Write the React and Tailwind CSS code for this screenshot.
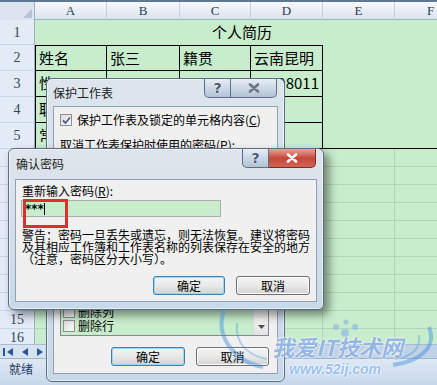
import React from "react";

const cols = [
  { id: "A", w: "w-[72px]" },
  { id: "B", w: "w-[73px]" },
  { id: "C", w: "w-[71px]" },
  { id: "D", w: "w-[72px]" },
  { id: "E", w: "w-[72px]" },
  { id: "F", w: "w-[72px]" },
];

// cells hidden under the dialogs are left empty
const table = [
  ["姓名", "张三", "籍贯", "云南昆明"],
  ["性", "", "", "198011"],
  ["职", "", "", ""],
  ["常", "", "", ""],
];

const rowHead =
  "w-[35px] shrink-0 h-full flex items-center justify-center bg-[#e3ebf6] border-r border-b border-r-[#9db2c9] border-b-[#c9d5e3] text-[14px] text-[#34465c] font-['Liberation_Serif',serif]";

function Check({ checked }) {
  return (
    <div className="w-[12px] h-[12px] shrink-0 border border-[#8e8f8f] bg-linear-to-br from-[#d9d9d9] to-[#fbfbfb] flex items-center justify-center">
      {checked && (
        <svg width="9" height="9" viewBox="0 0 9 9">
          <path d="M1 4.5 L3.5 7 L8 1.5" fill="none" stroke="#4a5f8a" strokeWidth="1.8" />
        </svg>
      )}
    </div>
  );
}

function Btn({ children, def, w }) {
  return (
    <div
      className={`${w} h-[19px] rounded-[3px] border flex items-center justify-center text-[12px] text-black bg-linear-to-b from-[#f4f4f4] via-[#e9e9e9] to-[#d2d2d2] ${
        def
          ? "border-[#3c7fb1] shadow-[inset_0_0_0_1px_#9fd6f2]"
          : "border-[#707070] shadow-[inset_0_0_0_1px_#fcfcfc]"
      }`}
    >
      {children}
    </div>
  );
}

function Caption({ active }) {
  return (
    <div className="flex">
      <div className="w-[27px] h-[19px] rounded-bl-[5px] border border-t-0 border-[#5d6f86] bg-linear-to-b from-[#e6edf5] to-[#b2c3d7] flex items-center justify-center">
        <span className="text-[14px] font-bold leading-none text-[#4a5a70] font-['DejaVu_Sans',sans-serif] [text-shadow:0_0_2px_#fff]">
          ?
        </span>
      </div>
      <div
        className={
          active
            ? "w-[47px] h-[19px] rounded-br-[5px] border border-t-0 border-l-0 border-[#7e2c22] bg-linear-to-b from-[#e8a596] via-[#c4473a] to-[#d2644f] flex items-center justify-center"
            : "w-[46px] h-[19px] rounded-br-[5px] border border-t-0 border-l-0 border-[#5d6f86] bg-linear-to-b from-[#e6edf5] to-[#b2c3d7] flex items-center justify-center"
        }
      >
        <svg width="12" height="10" viewBox="0 0 12 10">
          <path
            d="M2 1.5 L10 8.5 M10 1.5 L2 8.5"
            stroke={active ? "#ffffff" : "#6b7480"}
            strokeWidth="2.6"
            strokeLinecap="round"
          />
        </svg>
      </div>
    </div>
  );
}

function Sheet() {
  return (
    <div className="flex flex-col h-full">
      {/* column header */}
      <div className="flex h-[20px] shrink-0 border-t-2 border-[#5f7896]">
        <div className="w-[35px] shrink-0 h-full bg-[#dbe4ef] border-r border-[#9db2c9] flex items-end justify-end p-[2px]">
          <svg width="9" height="9" viewBox="0 0 9 9">
            <path d="M9 0 L9 9 L0 9 Z" fill="#b4c3d5" />
          </svg>
        </div>
        {cols.map((c) => (
          <div
            key={c.id}
            className={`${c.w} shrink-0 h-full border-r border-b border-r-[#c5d1de] border-b-[#9db2c9] bg-linear-to-b from-[#f6f9fc] to-[#dbe3ed] flex items-center justify-center text-[13px] text-[#2a3c54] font-['Liberation_Serif',serif]`}
          >
            {c.id}
          </div>
        ))}
      </div>

      <div className="h-[324px] shrink-0 overflow-hidden flex flex-col">
        <div className="flex h-[25px] shrink-0">
          <div className={rowHead}>1</div>
          <div className="flex-1 h-full flex items-center pl-[177px] text-[15px] text-black whitespace-nowrap">
            个人简历
          </div>
        </div>

        {table.map((cells, i) => (
          <div key={i} className="flex h-[26px] shrink-0">
            <div className={rowHead}>{i + 2}</div>
            {cells.map((c, j) => (
              <div
                key={j}
                className={`${cols[j].w} shrink-0 h-full border-r border-b border-black ${
                  i === 0 ? "border-t" : ""
                } ${j === 0 ? "border-l" : ""} ${
                  /^\d+$/.test(c) ? "justify-end" : ""
                } flex items-center px-[3px] text-[15px] text-black whitespace-nowrap overflow-hidden`}
              >
                {c}
              </div>
            ))}
            <div className={`w-[72px] shrink-0 h-full ${i === 3 ? "border-b border-black" : ""}`} />
            <div className={`w-[72px] shrink-0 h-full ${i === 3 ? "border-b border-black" : ""}`} />
          </div>
        ))}

        {Array.from({ length: 11 }, (_, k) => (
          <div key={k} className="flex h-[18px] shrink-0">
            <div className={rowHead}>{k + 6 >= 15 ? k + 6 : ""}</div>
            {cols.map((c) => (
              <div key={c.id} className={`${c.w} shrink-0 h-full border-r border-b border-[#b2d4b9]`} />
            ))}
          </div>
        ))}
      </div>

      {/* sheet tabs / scroll */}
      <div className="flex h-[14px] shrink-0 border-t border-[#a9bcd4]">
        <div className="w-[150px] h-full bg-[#d6e2f0] flex items-center gap-[9px] pl-[3px]">
          <svg width="10" height="8" viewBox="0 0 10 8">
            <rect x="0" y="0" width="2" height="8" fill="#2b5797" />
            <path d="M10 0 L4 4 L10 8 Z" fill="#2b5797" />
          </svg>
          <svg width="6" height="8" viewBox="0 0 6 8">
            <path d="M6 0 L0 4 L6 8 Z" fill="#2b5797" />
          </svg>
          <svg width="6" height="8" viewBox="0 0 6 8">
            <path d="M0 0 L6 4 L0 8 Z" fill="#2b5797" />
          </svg>
        </div>
        <div className="flex-1 h-full bg-[#c1d2e7]" />
      </div>

      {/* status bar */}
      <div className="flex-1 bg-linear-to-b from-[#dfe9f5] to-[#c6d7ec] border-t border-[#9fb5cf] pl-[9px] pt-[2px] text-[12px] leading-[16px] text-[#1f3a5f]">
        就绪
      </div>
    </div>
  );
}

function ProtectDialog() {
  return (
    <div className="absolute left-[46px] top-[78px] w-[239px] h-[304px] rounded-[6px] border border-[#5b6e85] bg-linear-to-b from-[#dde5ee] via-[#d3dde9] to-[#c9d8e8] shadow-[inset_0_0_0_1px_rgba(255,255,255,0.55)] flex flex-col">
      <div className="h-[27px] shrink-0 flex justify-between">
        <div className="pl-[6px] pt-[6px] text-[12px] leading-[16px] text-[#222]">保护工作表</div>
        <div className="pr-[7px]">
          <Caption />
        </div>
      </div>
      <div className="flex-1 mx-[6px] mb-[7px] bg-[#f0f0f0] border border-[#8ea1b8] flex flex-col px-[6px] text-[12px] text-black">
        <div className="flex items-center gap-[5px] mt-[6px] h-[14px] whitespace-nowrap">
          <Check checked />
          <span>
            保护工作表及锁定的单元格内容(<span className="underline">C</span>)
          </span>
        </div>
        <div className="mt-[11px] leading-[14px] whitespace-nowrap">
          取消工作表保护时使用的密码(<span className="underline">P</span>):
        </div>
        <div className="mt-auto h-[40px] mr-[2px] border border-[#828790] bg-[#c7edcc] flex">
          <div className="flex-1 flex flex-col justify-end pb-[2px]">
            {["删除列", "删除行"].map((t) => (
              <div key={t} className="h-[14px] flex items-center gap-[3px] pl-[2px] whitespace-nowrap">
                <Check />
                <span>{t}</span>
              </div>
            ))}
          </div>
          <div className="w-[15px] h-full bg-[#ececec] border-l border-[#dcdcdc] flex flex-col justify-end">
            <div className="h-[17px] flex items-center justify-center bg-linear-to-b from-[#f3f3f3] to-[#e2e2e2]">
              <svg width="7" height="4" viewBox="0 0 7 4">
                <path d="M0 0 L7 0 L3.5 4 Z" fill="#4d4d4d" />
              </svg>
            </div>
          </div>
        </div>
        <div className="mt-[11px] mb-[7px] flex justify-end gap-[11px] pr-[2px]">
          <Btn def w="w-[74px]">确定</Btn>
          <Btn w="w-[73px]">取消</Btn>
        </div>
      </div>
    </div>
  );
}

function ConfirmDialog() {
  return (
    <div className="absolute left-[8px] top-[148px] w-[316px] h-[162px] rounded-[6px] border border-[#5b6e85] bg-linear-to-b from-[#dfe5ec] via-[#d4dee9] to-[#c8d9ea] shadow-[inset_0_0_0_1px_rgba(255,255,255,0.55),5px_5px_10px_rgba(0,0,0,0.45)] flex flex-col">
      <div className="h-[30px] shrink-0 flex justify-between">
        <div className="pl-[7px] pt-[7px] text-[12px] leading-[16px] text-[#222]">确认密码</div>
        <div className="pr-[7px]">
          <Caption active />
        </div>
      </div>
      <div className="flex-1 mx-[6px] mb-[7px] bg-[#f0f0f0] border border-[#8ea1b8] flex flex-col px-[6px] text-[12px] text-black">
        <div className="mt-[4px] leading-[14px] whitespace-nowrap">
          重新输入密码(<span className="underline">R</span>):
        </div>
        <div className="mt-[2px] -ml-[1px] w-[200px] h-[17px] border border-[#abadb3] bg-[#c7edcc] flex items-center pl-[3px] leading-none">
          <span className="text-[12px] font-['DejaVu_Sans',sans-serif] font-bold">***</span>
          <span className="w-px h-[12px] bg-black" />
        </div>
        <div className="mt-[12px] leading-[12px] whitespace-nowrap">
          警告：密码一旦丢失或遗忘，则无法恢复。建议将密码
          <br />
          及其相应工作簿和工作表名称的列表保存在安全的地方
          <br />
          （注意，密码区分大小写）。
        </div>
        <div className="mt-auto mb-[6px] flex justify-end gap-[11px]">
          <Btn def w="w-[72px]">确定</Btn>
          <Btn w="w-[74px]">取消</Btn>
        </div>
      </div>
    </div>
  );
}

function Watermark() {
  return (
    <div className="absolute left-[215px] top-[305px] w-[222px] h-[80px] pointer-events-none">
      <svg className="absolute left-0 top-0" width="222" height="80" viewBox="0 0 222 80">
        <path d="M9 6 C 0 30, 18 56, 48 62" fill="none" stroke="#3f8fe0" strokeOpacity="0.45" strokeWidth="4" />
        <path d="M22 18 C 20 36, 30 50, 52 54" fill="none" stroke="#3f8fe0" strokeOpacity="0.35" strokeWidth="2" />
        <path d="M214 22 C 222 42, 206 56, 178 60" fill="none" stroke="#3f8fe0" strokeOpacity="0.45" strokeWidth="4" />
        <path d="M204 30 C 206 44, 196 52, 180 54" fill="none" stroke="#3f8fe0" strokeOpacity="0.35" strokeWidth="2" />
        <circle cx="130" cy="28" r="4" fill="#8fb8e8" fillOpacity="0.7" />
        <circle cx="140" cy="22" r="3" fill="#8fb8e8" fillOpacity="0.7" />
        <circle cx="121" cy="22" r="3" fill="#8fb8e8" fillOpacity="0.7" />
        <circle cx="131" cy="17" r="2.5" fill="#8fb8e8" fillOpacity="0.7" />
      </svg>
      <div className="absolute left-[57px] top-[28px] text-[22px] leading-[26px] font-bold italic text-[#2f6fc8]/50 whitespace-nowrap [text-shadow:0_0_2px_#fff,0_0_2px_#fff]">
        我爱IT技术网
      </div>
      <div className="absolute left-[74px] top-[55px] text-[14px] leading-[18px] font-bold italic text-[#5b98e6]/60 whitespace-nowrap font-['Liberation_Sans',sans-serif] [text-shadow:0_0_2px_#fff,0_0_2px_#fff]">
        www.52ij.com
      </div>
    </div>
  );
}

export default function App() {
  return (
    <div className="relative w-[437px] h-[385px] overflow-hidden bg-[#c7edcc] font-['Noto_Sans_CJK_SC',sans-serif]">
      <Sheet />
      <ProtectDialog />
      <ConfirmDialog />
      <div className="absolute left-[23px] top-[199px] w-[45px] h-[29px] border-[3px] border-[#d8312e]" />
      <Watermark />
    </div>
  );
}
